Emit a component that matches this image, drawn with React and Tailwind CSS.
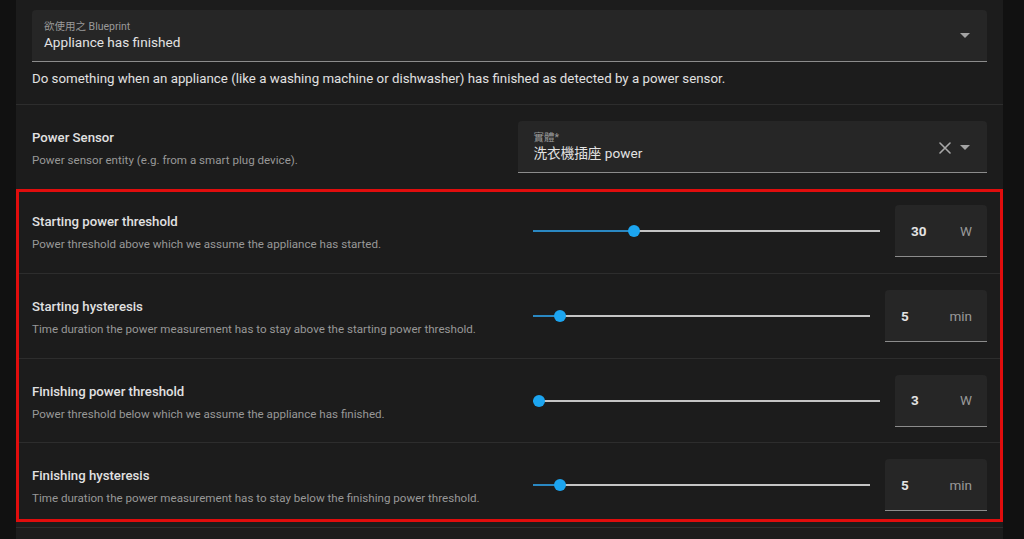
import React from "react";

const FONT = { fontFamily: 'Roboto, "Noto Sans CJK TC", "Noto Sans", sans-serif' };

function Arrow() {
  return (
    <svg width="10" height="5" viewBox="0 0 10 5" className="shrink-0">
      <path d="M0 0 L10 0 L5 5 Z" fill="#a3a3a3" />
    </svg>
  );
}

function XIcon() {
  return (
    <svg width="12" height="12" viewBox="0 0 12 12" className="shrink-0">
      <path d="M1 1 L11 11 M11 1 L1 11" stroke="#a8a8a8" strokeWidth="1.6" strokeLinecap="round" />
    </svg>
  );
}

function SelectField({ label, value, pad, clear }) {
  return (
    <div className={`h-[52px] bg-[#262626] rounded-t-[4px] border-b border-[#8c8c8c] flex items-center ${pad} pr-[17px]`}>
      <div className="flex-1 flex flex-col self-start pt-[10px]">
        <div className="text-[10.5px] leading-[14px] text-[#9a9a9a]">{label}</div>
        <div className="text-[13.6px] leading-[17px] text-[#e3e3e3]">{value}</div>
      </div>
      {clear && (
        <div className="mr-[9px] mt-[3px]">
          <XIcon />
        </div>
      )}
      <div className={clear ? "mt-[2px]" : ""}>
        <Arrow />
      </div>
    </div>
  );
}

function Slider({ pct }) {
  return (
    <div className="flex-1 relative h-[12px]">
      <div className="absolute left-0 right-0 top-[5px] h-[2px] bg-[#c4c4c4]" />
      <div className="absolute left-0 top-[5px] h-[2px] bg-[#2a88c2]" style={{ width: `${pct}%` }} />
      <div
        className="absolute top-0 w-[12px] h-[12px] -ml-[6px] rounded-full bg-[#1ca5f0]"
        style={{ left: `${pct}%` }}
      />
    </div>
  );
}

function NumberBox({ value, unit, width }) {
  return (
    <div className={`${width} h-[52px] bg-[#262626] rounded-t-[4px] border-b border-[#8c8c8c] flex items-center justify-between pl-[16px] pr-[15px] pt-[1px]`}>
      <span className="text-[13.5px] font-bold text-[#e3e3e3]">{value}</span>
      <span className="text-[13.5px] text-[#9a9a9a]">{unit}</span>
    </div>
  );
}

function Row({ title, desc, children }) {
  return (
    <div className="h-[84.6px] border-t border-[#2d2d2d] flex items-center px-4 gap-4">
      <div className="flex-1 flex flex-col pt-[2px]">
        <div className="text-[13.2px] leading-[24px] font-medium text-[#e1e1e1]">{title}</div>
        <div className="text-[11.6px] leading-[20px] text-[#989898]">{desc}</div>
      </div>
      <div className="flex-1 flex items-center">{children}</div>
    </div>
  );
}

function SliderRow({ title, desc, pct, value, unit }) {
  const isMin = unit === "min";
  return (
    <Row title={title} desc={desc}>
      <div className="flex-1 flex items-center pl-[15px] gap-[15px]">
        <Slider pct={pct} />
        <NumberBox value={value} unit={unit} width={isMin ? "w-[102px]" : "w-[92px]"} />
      </div>
    </Row>
  );
}

export default function App() {
  return (
    <div className="w-[1024px] h-[539px] overflow-hidden bg-[#111111] pl-4" style={FONT}>
      <div className="w-[987px] h-full bg-[#1c1c1c]">
        <div className="px-4 pt-[10px] pb-[16px]">
          <SelectField label="欲使用之 Blueprint" value="Appliance has finished" pad="pl-[12px]" />
          <div className="mt-[7px] mb-[-1px] text-[13.3px] leading-[20px] text-[#e1e1e1]">
            Do something when an appliance (like a washing machine or dishwasher) has finished as detected by a power sensor.
          </div>
        </div>
        <Row title="Power Sensor" desc="Power sensor entity (e.g. from a smart plug device).">
          <div className="flex-1">
            <SelectField label="實體*" value="洗衣機插座 power" pad="pl-[16px]" clear />
          </div>
        </Row>
        <div className="relative">
          <SliderRow
            title="Starting power threshold"
            desc="Power threshold above which we assume the appliance has started."
            pct={29.3}
            value="30"
            unit="W"
          />
          <SliderRow
            title="Starting hysteresis"
            desc="Time duration the power measurement has to stay above the starting power threshold."
            pct={8}
            value="5"
            unit="min"
          />
          <SliderRow
            title="Finishing power threshold"
            desc="Power threshold below which we assume the appliance has finished."
            pct={2}
            value="3"
            unit="W"
          />
          <SliderRow
            title="Finishing hysteresis"
            desc="Time duration the power measurement has to stay below the finishing power threshold."
            pct={8}
            value="5"
            unit="min"
          />
          <div className="pointer-events-none absolute left-0 right-0 top-0 bottom-[5px] border-[3px] border-[#e00d0d]" />
        </div>
        <div className="border-t border-[#2d2d2d] h-[20px]" />
      </div>
    </div>
  );
}
